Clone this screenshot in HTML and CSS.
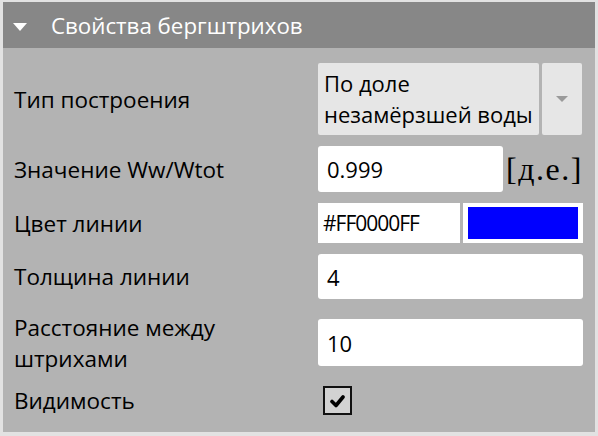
FILE: index.html
```html
<!DOCTYPE html>
<html lang="ru">

<head>
    <meta charset="UTF-8">
    <meta name="viewport" content="width=device-width, initial-scale=1.0">
    <title>Свойства бергштрихов</title>
    <link rel="stylesheet" href="styles.css">
</head>

<body>
    <div class="panel">
        <!-- заголовок -->
        <div class="header">
            <svg class="caret" width="14" height="8" viewBox="0 0 14 8">
                <path d="M0 0 H14 L7 8 Z" fill="#fff" />
            </svg>
            <span class="title">Свойства бергштрихов</span>
        </div>
        <!-- свойства -->
        <div class="props">
            <div class="label">Тип построения</div>
            <div class="field">
                <div class="select">По доле<br>незамёрзшей воды</div>
                <div class="select-btn">
                    <svg width="12" height="6" viewBox="0 0 12 6">
                        <path d="M0 0 H12 L6 6 Z" fill="#9a9a9a" />
                    </svg>
                </div>
            </div>

            <div class="label">Значение Ww/Wtot</div>
            <div class="field">
                <div class="input short">0.999</div>
                <div class="unit">[д.е.]</div>
            </div>

            <div class="label">Цвет линии</div>
            <div class="field">
                <div class="input hex">#FF0000FF</div>
                <div class="swatch"><div class="swatch-color"></div></div>
            </div>

            <div class="label">Толщина линии</div>
            <div class="field">
                <div class="input full">4</div>
            </div>

            <div class="label two-lines">Расстояние между<br>штрихами</div>
            <div class="field">
                <div class="input full tall">10</div>
            </div>

            <div class="label">Видимость</div>
            <div class="field">
                <div class="checkbox">
                    <svg width="17" height="14" viewBox="0 0 17 14">
                        <path d="M3 7.5 L7 11.5 L14 3" fill="none" stroke="#000" stroke-width="3.6" stroke-linecap="round" stroke-linejoin="round" />
                    </svg>
                </div>
            </div>
        </div>
    </div>
</body>

</html>
```

FILE: styles.css
```css
* {
    margin: 0;
    padding: 0;
    box-sizing: border-box;
}

body {
    font-family: "Open Sans", "Noto Sans", sans-serif;
    background: #e4e4e4;
}

.panel {
    width: 598px;
    height: 436px;
    background: #b3b3b3;
    border-left: 3px solid #e2e2e2;
    border-top: 2px solid #e2e2e2;
    border-right: 3px solid #e2e2e2;
    border-bottom: 4px solid #e2e2e2;
}

/* заголовок */
.header {
    height: 46px;
    background: #878787;
    display: flex;
    align-items: center;
    padding-left: 10px;
}

.caret {
    margin-top: 4px;
}

.title {
    margin-left: 24px;
    color: #fff;
    font-size: 22.3px;
}

/* сетка свойств */
.props {
    display: grid;
    grid-template-columns: 304px 265px;
    grid-template-rows: 72px 46px 40px 45px 65px 29px;
    row-gap: 11px;
    padding: 15px 0 0 11px;
}

.label {
    display: flex;
    align-items: center;
    font-size: 22.5px;
    color: #000;
}

.two-lines {
    line-height: 31px;
}

.field {
    display: flex;
    align-items: center;
    gap: 3px;
}

.select {
    width: 221px;
    height: 72px;
    background: #e6e6e6;
    border-radius: 2px;
    padding: 0 6px;
    font-size: 22px;
    line-height: 31px;
    display: flex;
    align-items: center;
}

.select-btn {
    width: 40px;
    height: 72px;
    background: #e6e6e6;
    border-radius: 2px;
    display: flex;
    align-items: center;
    justify-content: center;
}

.input {
    height: 100%;
    background: #fff;
    border-radius: 3px;
    padding: 0 9px;
    font-size: 22px;
    display: flex;
    align-items: center;
}

.short {
    width: 185px;
}

.unit {
    font-family: "Liberation Serif", serif;
    font-size: 32px;
    letter-spacing: 1.5px;
}

.hex {
    width: 142px;
    border-radius: 0;
    padding: 0 5px;
    font-size: 21px;
    letter-spacing: -1px;
}

.swatch {
    width: 120px;
    height: 100%;
    background: #fff;
    padding: 4px 5px;
}

.swatch-color {
    width: 100%;
    height: 100%;
    background: #0000ff;
}

.full {
    width: 265px;
}

.tall {
    height: 47px;
}

.checkbox {
    width: 29px;
    height: 29px;
    margin-left: 5px;
    border: 2px solid #111;
    background: #d2d2d2;
    display: flex;
    align-items: center;
    justify-content: center;
}
```
